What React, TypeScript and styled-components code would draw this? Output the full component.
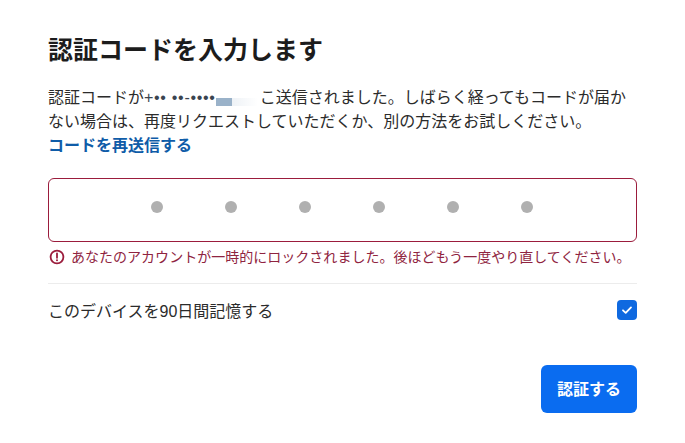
import styled, { createGlobalStyle } from "styled-components";

const GlobalStyle = createGlobalStyle`
  html, body {
    margin: 0;
    padding: 0;
    background: #fff;
  }
  body {
    font-family: "Liberation Sans", "Noto Sans CJK JP", sans-serif;
    color: #1c1c1c;
  }
`;

const Page = styled.div`
  width: 685px;
  height: 443px;
  box-sizing: border-box;
  padding: 32px 48px 0;
  display: flex;
  flex-direction: column;
  overflow: hidden;
`;

const Title = styled.h1`
  margin: 0;
  font-size: 25px;
  line-height: 36px;
  font-weight: 700;
  color: #1c1c1c;
`;

const Message = styled.p`
  margin: 18px 0 0;
  font-size: 16px;
  line-height: 24px;
  color: #2b2b2b;
`;

const MaskedPhone = styled.span`
  letter-spacing: 0.7px;
  color: #3a4450;
`;

const Smudge = styled.span`
  display: inline-block;
  width: 42px;
  height: 8px;
  margin-right: 2px;
  vertical-align: -3px;
  background: linear-gradient(to right, #9ab2c9 0 16px, #eef2f6 16px, #ffffff 100%);
`;

const ResendLink = styled.a`
  display: block;
  font-weight: 700;
  color: #0f5ca8;
  text-decoration: none;
`;

const CodeBox = styled.div`
  margin-top: 20px;
  height: 64px;
  box-sizing: border-box;
  border: 1px solid #9b1c3c;
  border-radius: 6px;
  padding: 0 1px 7px 0;
  display: flex;
  justify-content: center;
  align-items: center;
  gap: 62px;
`;

const Dot = styled.span`
  width: 12px;
  height: 12px;
  border-radius: 50%;
  background: #b0b0b0;
`;

const ErrorRow = styled.div`
  margin-top: 5px;
  display: flex;
  align-items: center;
  gap: 6px;
  padding-left: 1px;
  font-size: 14px;
  line-height: 20px;
  letter-spacing: 0.02px;
  color: #8f2440;
  white-space: nowrap;
`;

const Divider = styled.hr`
  margin: 16px 0 0;
  border: 0;
  border-top: 1px solid #ececec;
`;

const RememberRow = styled.div`
  margin-top: 14px;
  height: 24px;
  display: flex;
  justify-content: space-between;
  align-items: center;
  font-size: 16px;
  color: #2b2b2b;
`;

const Checkbox = styled.span`
  width: 20px;
  height: 20px;
  border-radius: 4px;
  background: #0f69e0;
  display: flex;
  align-items: center;
  justify-content: center;
`;

const Actions = styled.div`
  margin-top: 43px;
  display: flex;
  justify-content: flex-end;
`;

const VerifyButton = styled.button`
  width: 96px;
  height: 48px;
  padding: 0 0 2px;
  border: 0;
  border-radius: 6px;
  background: #0a6cf0;
  color: #fff;
  font-family: inherit;
  font-size: 16px;
  font-weight: 700;
`;

function AlertIcon() {
  return (
    <svg width="16" height="16" viewBox="0 0 16 16" fill="none">
      <circle cx="8" cy="8" r="6.4" stroke="#9b1c3c" strokeWidth="1.8" />
      <path d="M8 4.4v4.4" stroke="#9b1c3c" strokeWidth="1.8" strokeLinecap="round" />
      <circle cx="8" cy="11.3" r="1" fill="#9b1c3c" />
    </svg>
  );
}

function CheckIcon() {
  return (
    <svg width="12" height="12" viewBox="0 0 12 12" fill="none">
      <path d="M2 6.3l2.7 2.6L10 3.4" stroke="#fff" strokeWidth="1.8" strokeLinecap="round" strokeLinejoin="round" />
    </svg>
  );
}

const dots = [0, 1, 2, 3, 4, 5];

export default function App() {
  return (
    <>
      <GlobalStyle />
      <Page>
        <Title>認証コードを入力します</Title>
        <Message>
          認証コードが<MaskedPhone>+•• ••-••••</MaskedPhone>
          <Smudge />こ送信されました。しばらく経ってもコードが届かない場合は、再度リクエストしていただくか、別の方法をお試しください。
          <ResendLink href="#">コードを再送信する</ResendLink>
        </Message>
        <CodeBox>
          {dots.map(d => <Dot key={d} />)}
        </CodeBox>
        <ErrorRow>
          <AlertIcon />
          あなたのアカウントが一時的にロックされました。後ほどもう一度やり直してください。
        </ErrorRow>
        <Divider />
        <RememberRow>
          このデバイスを90日間記憶する
          <Checkbox><CheckIcon /></Checkbox>
        </RememberRow>
        <Actions>
          <VerifyButton>認証する</VerifyButton>
        </Actions>
      </Page>
    </>
  );
}
